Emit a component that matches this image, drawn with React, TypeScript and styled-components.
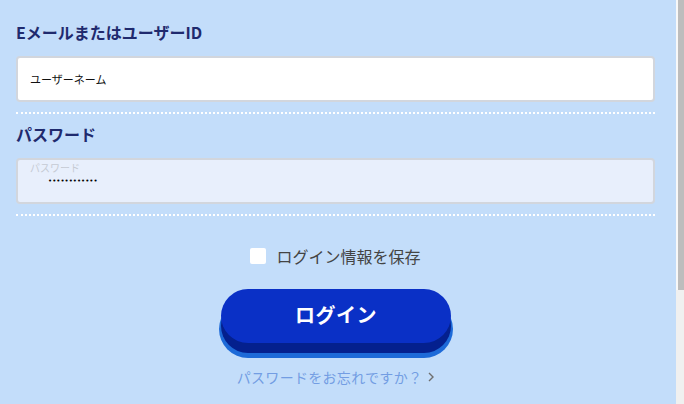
import React from "react";
import styled, { createGlobalStyle } from "styled-components";

const Global = createGlobalStyle`
  body {
    margin: 0;
    background: #c3ddfa;
    font-family: "Noto Sans CJK JP", "Noto Sans", sans-serif;
    overflow: hidden;
  }
`;

const Frame = styled.div`
  display: flex;
  height: 404px;
`;

const Page = styled.div`
  flex: 1;
  box-sizing: border-box;
  padding: 20px 21px 0 16px;
  display: flex;
  flex-direction: column;
`;

const ScrollTrack = styled.div`
  width: 8px;
  background: #f0f0f0;
  display: flex;
  flex-direction: column;
`;

const ScrollThumb = styled.div`
  height: 290px;
  background: #bdbdbd;
  border-left: 2px solid #f8f8f8;
`;

const Field = styled.div`
  display: flex;
  flex-direction: column;
  padding-bottom: 10px;
  border-bottom: 2px dotted #ffffff;
  margin-bottom: 8px;
`;

const Label = styled.label`
  font-size: 16px;
  line-height: 24px;
  font-weight: 700;
  color: #1f2a6e;
  margin-bottom: 12px;
`;

const InputBox = styled.div<{ $filled?: boolean }>`
  height: 46px;
  box-sizing: border-box;
  border: 2px solid #d2d6dd;
  border-radius: 4px;
  background: ${(p) => (p.$filled ? "#e8effc" : "#ffffff")};
  display: flex;
  flex-direction: column;
  justify-content: center;
  padding-left: 12px;
  position: relative;
`;

const TextInput = styled.input`
  border: none;
  outline: none;
  background: transparent;
  font-family: "Noto Sans CJK JP", sans-serif;
  font-size: 11px;
  color: #111;
  padding: 0;
  width: 100%;
`;

const Floating = styled.span`
  position: absolute;
  left: 12px;
  top: 1px;
  font-size: 10px;
  line-height: 14px;
  color: #c5cad3;
`;

const PassInput = styled.input`
  border: none;
  outline: none;
  background: transparent;
  font-family: "DejaVu Sans", sans-serif;
  font-size: 7px;
  color: #000;
  padding: 0 0 0 18px;
  width: 200px;
`;

const RememberRow = styled.label`
  margin-top: 20px;
  display: flex;
  align-items: center;
  justify-content: center;
  gap: 10px;
  font-size: 16px;
  line-height: 24px;
  color: #444444;
`;

const Box = styled.span`
  width: 16px;
  height: 16px;
  border-radius: 2px;
  background: #ffffff;
`;

const ButtonWrap = styled.div`
  display: flex;
  justify-content: center;
  margin-top: 21px;
  padding-left: 1px;
`;

const LoginButton = styled.button`
  width: 230px;
  height: 54px;
  border: none;
  border-radius: 27px;
  background: #0a30c6;
  color: #ffffff;
  font-family: "Noto Sans CJK JP", sans-serif;
  font-size: 20px;
  font-weight: 700;
  letter-spacing: 0.5px;
  box-shadow: 0 10px 0 #04208e, 0 13px 0 2px #1d6ad8;
  cursor: pointer;
  padding: 0 0 4px;
`;

const Forgot = styled.a`
  margin-top: 24px;
  display: flex;
  align-items: center;
  justify-content: center;
  gap: 6px;
  font-size: 14px;
  line-height: 20px;
  letter-spacing: 0.3px;
  color: #739de3;
  text-decoration: none;
  padding-left: 0;
`;

export default function App() {
  return (
    <>
      <Global />
      <Frame>
        <Page>
          <Field>
            <Label>EメールまたはユーザーID</Label>
            <InputBox>
              <TextInput readOnly value="ユーザーネーム" />
            </InputBox>
          </Field>
          <Field>
            <Label>パスワード</Label>
            <InputBox $filled>
              <Floating>パスワード</Floating>
              <PassInput type="password" readOnly value="abcdefghijkl" />
            </InputBox>
          </Field>
          <RememberRow>
            <Box />
            ログイン情報を保存
          </RememberRow>
          <ButtonWrap>
            <LoginButton>ログイン</LoginButton>
          </ButtonWrap>
          <Forgot href="#">
            パスワードをお忘れですか？
            <svg width="6" height="10" viewBox="0 0 6 10">
              <path d="M1 1 L5 5 L1 9" fill="none" stroke="#6f6f6f" strokeWidth="1.4" />
            </svg>
          </Forgot>
        </Page>
        <ScrollTrack>
          <ScrollThumb />
        </ScrollTrack>
      </Frame>
    </>
  );
}
